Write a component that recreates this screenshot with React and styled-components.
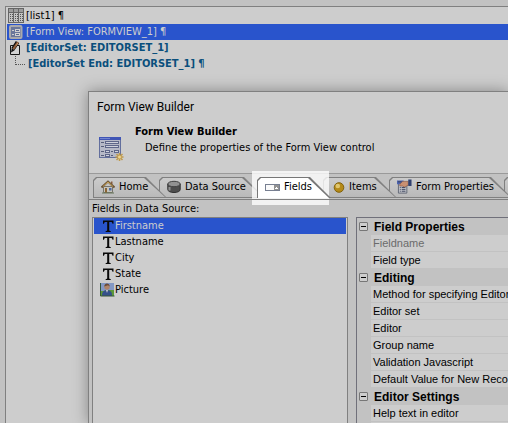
import React, { useState } from 'react';
import styled, { createGlobalStyle } from 'styled-components';

const face = '#cdcdcd';
const chrome = '#c2c2c2';
const line = '#808080';
const accent = '#2954cc';

const GlobalStyle = createGlobalStyle`
  * { box-sizing: border-box; }
  body {
    margin: 0;
    background: ${chrome};
    font: 11px/16px "DejaVu Sans Condensed", "DejaVu Sans", sans-serif;
    color: #000;
  }
  button { font: inherit; color: inherit; }
  h1, h2, p, ul { margin: 0; padding: 0; font: inherit; }
  ul { list-style: none; }
`;

const Screen = styled.main`
  position: relative;
  display: flex;
  min-height: 100vh;
  padding: 6px 0 0 5px;
  overflow: hidden;
`;

const TreePanel = styled.ul`
  flex: 1;
  padding: 1px 0 0 1px !important;
  border: solid ${line};
  border-width: 1px 0 0 1px;
  background: ${face};
`;

const TreeRow = styled.li`
  display: flex;
  align-items: center;
  height: 16px;
  padding-left: ${(p) => (p.$child ? 6 : 1)}px;
  gap: ${(p) => (p.$child ? 3 : 2)}px;
  white-space: pre;
  font-weight: ${(p) => (p.$strong ? 'bold' : 'normal')};
  color: ${(p) => (p.$selected ? face : p.$strong ? '#0a4f7c' : '#000')};
  background: ${(p) => (p.$selected ? accent : 'transparent')};
`;

const Dialog = styled.section`
  position: absolute;
  inset: 91px 0 0 88px;
  display: flex;
  flex-direction: column;
  border: solid ${line};
  border-width: 1px 0 0 1px;
  background: ${chrome};
  box-shadow: 0 0 14px rgba(0, 0, 0, 0.35);
`;

const TitleBar = styled.h1`
  flex: none;
  padding: 7px 8px !important;
  background: ${face};
  font: 12px/16px Roboto, sans-serif !important;
`;

const Intro = styled.header`
  flex: none;
  display: flex;
  align-items: flex-start;
  gap: 10px;
  height: 52px;
  padding: 2px 10px;
  border-bottom: 1px solid #9a9a9a;
  background: ${face};
  svg { margin-top: 13px; }
`;

const IntroText = styled.div`
  display: flex;
  flex-direction: column;
  white-space: nowrap;
  h2 { font-weight: bold; }
  p { padding-left: 10px; }
`;

const TabStrip = styled.div`
  flex: none;
  display: flex;
  height: 26px;
  padding: 3px 0 0 4px;
  border-bottom: 1px solid ${line};
`;

const slant = 'polygon(0 3px, 3px 0, calc(100% - 21px) 0, 100% 100%, 0 100%)';

const TabSlot = styled.div`
  position: relative;
  flex: none;
  width: ${(p) => p.$width}px;
  height: 21px;
  margin-right: -8px;
  z-index: ${(p) => p.$level};
  &::before {
    content: ${(p) => (p.$spotlit ? "''" : 'none')};
    position: absolute;
    inset: -6px 2px -7px -5px;
    background:
      linear-gradient(transparent 28px, #808080 28px, #808080 29px, transparent 29px),
      rgba(255, 255, 255, 0.78);
  }
`;

const TabButton = styled.button`
  position: relative;
  display: flex;
  align-items: center;
  gap: 4px;
  width: 100%;
  height: 100%;
  padding: 0 0 1px 8px;
  border: 0;
  background: ${(p) => (p.$active ? '#777' : '#808080')};
  clip-path: ${slant};
  white-space: nowrap;
  &::before {
    content: '';
    position: absolute;
    inset: 1px 2px ${(p) => (p.$active ? 0 : 1)}px 1px;
    background: ${(p) => (p.$active ? '#fff' : 'linear-gradient(#cbcbcb, #b9b9b9)')};
    clip-path: ${slant};
  }
  svg, span { position: relative; }
`;

const Body = styled.div`
  flex: 1;
  min-height: 0;
  display: flex;
  gap: 8px;
  padding-left: 3px;
`;

const SourceColumn = styled.div`
  flex: 0 0 256px;
  display: flex;
  flex-direction: column;
  padding-top: 1px;
`;

const FieldList = styled.ul`
  flex: 1;
  border: 1px solid ${line};
  border-bottom: 0;
  padding: 0 1px !important;
  background: ${face};
`;

const FieldRow = styled.li`
  display: flex;
  align-items: center;
  height: 16px;
  padding-left: 6px;
  color: ${(p) => (p.$selected ? face : '#000')};
  background: ${(p) => (p.$selected ? accent : 'transparent')};
`;

const PropertyGrid = styled.div`
  flex: 1;
  min-width: 0;
  margin-top: 17px;
  border: solid #70707a;
  border-width: 1px 0 0 1px;
  overflow: hidden;
  font: 11px/16px "Liberation Sans", Arial, sans-serif;
`;

const GroupRow = styled.div`
  display: flex;
  align-items: center;
  height: 17px;
  padding-left: 2px;
  gap: 6px;
  font-size: 12px;
  font-weight: bold;
`;

const Toggle = styled.button`
  display: grid;
  place-items: center;
  width: 9px;
  height: 9px;
  padding: 0;
  border: 1px solid #777;
  border-radius: 1px;
  background: ${face};
  &::before {
    content: '';
    width: 5px;
    height: 1px;
    background: #000;
  }
`;

const PropertyRow = styled.div`
  height: 17px;
  margin-left: 14px;
  padding-left: 2px;
  border-bottom: 1px solid ${chrome};
  background: ${face};
  color: ${(p) => (p.$muted ? '#6b6b6b' : '#000')};
  white-space: nowrap;
`;

const ListIcon = () => (
  <svg width="16" height="16" viewBox="0 0 16 16" shapeRendering="crispEdges">
    <path d="M1 1h14v13H1z" fill="#c4c4c4" />
    <path d="M1 1h14v3H1z" fill="#9c9c9c" />
    <path d="M.5 .5h15v14H.5zM5.500 1v13M10.500 1v13M1 4.500h14" fill="none" stroke="#666" />
    <path d="M2 6.500h3M7 6.500h3M12 6.500h3M2 8.500h3M7 8.500h3M12 8.500h3M2 10.500h3M7 10.500h3M12 10.500h3M2 12.500h3M7 12.500h3M12 12.500h3" stroke="#555" strokeDasharray="1 1" />
  </svg>
);

const FormIcon = () => (
  <svg width="16" height="16" viewBox="0 0 16 16">
    <rect x="2" y="2" width="11.500" height="12" rx="1" fill="#6a779b" stroke="#a9a9ac" strokeWidth="2" />
    <path d="M4 6.500h2M4 10.500h2" stroke="#d0d0d0" />
    <rect x="7.500" y="5.500" width="4" height="2" fill="#59688f" stroke="#d0d0d0" />
    <rect x="7.500" y="9.500" width="4" height="2" fill="#59688f" stroke="#d0d0d0" />
  </svg>
);

const EditIcon = () => (
  <svg width="16" height="16" viewBox="0 0 16 16">
    <path d="M2.500 5.500h9v9h-9z" fill="#d2d2d2" stroke="#151515" />
    <path d="M5 9L9.500 2.200" stroke="#111" strokeWidth="4" />
    <path d="M5.400 9L10 2.200" stroke="#8e5c3a" strokeWidth="2.200" />
    <path d="M8.300 5.500l1.700-2.700" stroke="#c79467" />
    <path d="M3 12.500l.7-4.300 3 2z" fill="#111" />
  </svg>
);

const Branch = () => (
  <svg width="12" height="16" viewBox="0 0 12 16" shapeRendering="crispEdges">
    <path d="M2.500 0v9M3 8.500h9" stroke="#555" strokeDasharray="1 1" fill="none" />
  </svg>
);

const BuilderIcon = () => (
  <svg width="26" height="26" viewBox="0 0 26 26">
    <rect x=".5" y=".5" width="21" height="20" fill="#b6b9c7" stroke="#636f9d" />
    <path d="M0 0h22v3H0z" fill="#4055b5" />
    <path d="M1 1h10v1H1z" fill="#7385cf" />
    <path d="M2 5.500h3M2 9.500h3M2 14.500h3M2 18.500h3M12 14.500h2M12 18.500h2" stroke="#555c78" />
    <g fill="#cfd2dc" stroke="#5f678a">
      <rect x="6.500" y="4.500" width="13" height="2" />
      <rect x="6.500" y="8.500" width="13" height="2" />
      <rect x="6.500" y="13.500" width="4" height="2" />
      <rect x="15.500" y="13.500" width="4" height="2" />
      <rect x="6.500" y="17.500" width="4" height="2" />
    </g>
    <path d="M20.500 16v8M16.500 20h8M17.500 17l6 6M23.500 17l-6 6" stroke="#c09a4c" strokeWidth="1.500" />
    <circle cx="20.500" cy="20" r="1.500" fill="#ecd58f" />
  </svg>
);

const HomeIcon = () => (
  <svg width="14" height="14" viewBox="0 0 14 14">
    <path d="M2.500 6.500h9v6h-9z" fill="#c6c4bb" stroke="#77746c" />
    <path d="M10 1.500h1.500v3H10z" fill="#875c40" />
    <path d="M.5 7.500L7 1.500l6.500 6" fill="none" stroke="#6c5539" strokeWidth="2" />
    <path d="M2 6.500l5-4.500 5 4.500" fill="none" stroke="#c7a154" />
    <path d="M4 8h2v5H4z" fill="#8a6434" />
    <path d="M8 8h2.500v2.500H8z" fill="#4c6aa5" />
    <path d="M1 13h12" stroke="#66765a" />
  </svg>
);

const DatabaseIcon = () => (
  <svg width="14" height="14" viewBox="0 0 14 14">
    <path d="M.8 4v5.500c0 4 12.400 4 12.400 0V4z" fill="#4e4e4e" stroke="#303030" />
    <path d="M2.500 7v3.500" stroke="#929292" strokeWidth="2" />
    <ellipse cx="7" cy="4" rx="6.200" ry="2.700" fill="#929292" stroke="#444" />
  </svg>
);

const FieldIcon = () => (
  <svg width="15" height="14" viewBox="0 0 15 14" shapeRendering="crispEdges">
    <rect x=".5" y="4.500" width="14" height="6" fill="#fafafa" stroke="#777f91" />
    <path d="M9 5h5v5H9z" fill="#929292" />
    <path d="M10 8.500h3M11 7.500h1" stroke="#fff" />
  </svg>
);

const ItemIcon = () => (
  <svg width="14" height="14" viewBox="0 0 14 14">
    <circle cx="8" cy="7.500" r="4.800" fill="#b58a18" stroke="#80620f" />
    <circle cx="6.800" cy="6" r="2.300" fill="#dfc56d" />
  </svg>
);

const PropertiesIcon = () => (
  <svg width="15" height="16" viewBox="0 0 16 16">
    <path d="M1.500 3.500h9v11h-9z" fill="#c3c5cb" stroke="#5f6573" />
    <path d="M0 1h7v4H0z" fill="#4e64b0" />
    <path d="M1 2.500h4M3 8.500h1M5 8.500h4M3 10.500h1M5 10.500h4M3 12.500h1M5 12.500h4" stroke="#39405a" />
    <path d="M3 5l3-3h6v4l-4 2-2-1-3 0z" fill="#c99072" stroke="#8d5841" strokeWidth=".7" />
    <path d="M12 0h3.500v7H12z" fill="#31416f" />
  </svg>
);

const TextIcon = () => (
  <svg width="15" height="16" viewBox="0 0 15 16">
    <path d="M3 2.500h10.500v3.200h-1c-.2-1.300-.7-1.700-2-1.700H9.200v8c0 .8.400 1 1.500 1v1h-5v-1c1 0 1.500-.2 1.500-1V4H6c-1.300 0-1.800.4-2 1.700H3z" fill="#090909" />
  </svg>
);

const PictureIcon = () => (
  <svg width="15" height="16" viewBox="0 0 15 16">
    <path d="M0 1h14v13H0z" fill="#8398c4" />
    <path d="M0 9h4l2-1h8v6H0z" fill="#5b9838" />
    <path d="M2 14c0-4 1-5 4-6h2c3 1 4 2 4 6z" fill="#34508a" />
    <path d="M6 8l1 3 1-3z" fill="#d0d0d0" />
    <circle cx="7" cy="5" r="2.700" fill="#b08468" />
    <path d="M4.300 4.500c0-4 5.400-4 5.400 0L8 3.300z" fill="#6b4a36" />
    <path d="M.5 1v13h14" fill="none" stroke="#365739" />
  </svg>
);

const tabs = [
  { label: 'Home', Icon: HomeIcon, width: 74 },
  { label: 'Data Source', Icon: DatabaseIcon, width: 106 },
  { label: 'Fields', Icon: FieldIcon, width: 74 },
  { label: 'Items', Icon: ItemIcon, width: 74 },
  { label: 'Form Properties', Icon: PropertiesIcon, width: 123 },
  { label: '', Icon: null, width: 74 },
];

const fields = ['Firstname', 'Lastname', 'City', 'State', 'Picture'];

const groups = [
  { name: 'Field Properties', rows: ['Fieldname', 'Field type'] },
  {
    name: 'Editing',
    rows: [
      'Method for specifying Editor',
      'Editor set',
      'Editor',
      'Group name',
      'Validation Javascript',
      'Default Value for New Recor',
    ],
  },
  { name: 'Editor Settings', rows: ['Help text in editor', ''] },
];

export default function App() {
  const [active, setActive] = useState('Fields');
  const [field, setField] = useState('Firstname');
  return (
    <Screen>
      <GlobalStyle />
      <TreePanel>
        <TreeRow><ListIcon /><span>[list1] ¶</span></TreeRow>
        <TreeRow $selected><FormIcon /><span>[Form View: FORMVIEW_1] ¶</span></TreeRow>
        <TreeRow $strong><EditIcon /><span>[EditorSet: EDITORSET_1]</span></TreeRow>
        <TreeRow $strong $child><Branch /><span>[EditorSet End: EDITORSET_1] ¶</span></TreeRow>
      </TreePanel>

      <Dialog aria-label="Form View Builder">
        <TitleBar>Form View Builder</TitleBar>
        <Intro>
          <BuilderIcon />
          <IntroText>
            <h2>Form View Builder</h2>
            <p>Define the properties of the Form View control</p>
          </IntroText>
        </Intro>
        <TabStrip role="tablist">
          {tabs.map(({ label, Icon, width }, i) => {
            const on = active === label;
            return (
              <TabSlot key={label} $width={width} $spotlit={on} $level={on ? 10 : 6 - i}>
                <TabButton
                  role="tab"
                  aria-selected={on}
                  aria-label={label || 'More'}
                  $active={on}
                  onClick={() => label && setActive(label)}
                >
                  {Icon && <Icon />}
                  <span>{label}</span>
                </TabButton>
              </TabSlot>
            );
          })}
        </TabStrip>
        <Body>
          <SourceColumn>
            <span id="source-label">Fields in Data Source:</span>
            <FieldList role="listbox" aria-labelledby="source-label">
              {fields.map((name) => (
                <FieldRow
                  key={name}
                  role="option"
                  aria-selected={name === field}
                  $selected={name === field}
                  onClick={() => setField(name)}
                >
                  {name === 'Picture' ? <PictureIcon /> : <TextIcon />}
                  <span>{name}</span>
                </FieldRow>
              ))}
            </FieldList>
          </SourceColumn>
          <PropertyGrid>
            {groups.map(({ name, rows }) => (
              <React.Fragment key={name}>
                <GroupRow>
                  <Toggle aria-label={`Collapse ${name}`} />
                  <span>{name}</span>
                </GroupRow>
                {rows.map((row) => (
                  <PropertyRow key={row} $muted={row === 'Fieldname'}>{row}</PropertyRow>
                ))}
              </React.Fragment>
            ))}
          </PropertyGrid>
        </Body>
      </Dialog>
    </Screen>
  );
}
